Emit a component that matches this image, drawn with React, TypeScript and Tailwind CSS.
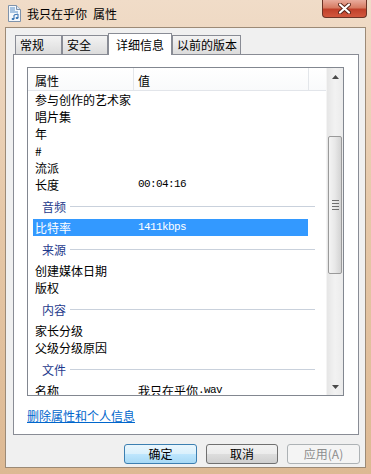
import React from "react";

type Row = { k: string; v?: string; group?: boolean; sel?: boolean };

const rows: Row[] = [
  { k: "参与创作的艺术家" },
  { k: "唱片集" },
  { k: "年" },
  { k: "#" },
  { k: "流派" },
  { k: "长度", v: "00:04:16" },
  { k: "音频", group: true },
  { k: "比特率", v: "1411kbps", sel: true },
  { k: "来源", group: true },
  { k: "创建媒体日期" },
  { k: "版权" },
  { k: "内容", group: true },
  { k: "家长分级" },
  { k: "父级分级原因" },
  { k: "文件", group: true },
  { k: "名称", v: "我只在乎你" },
];

function FileIcon() {
  return (
    <svg width="15" height="17" viewBox="0 0 15 17">
      <path d="M1.5 0.5h8l4 4v12h-12z" fill="#f4f8fc" stroke="#7f93ab" />
      <path d="M9.5 0.5v4h4" fill="#dfe8f2" stroke="#7f93ab" />
      <rect x="3" y="2.5" width="5" height="1" fill="#5b8fc7" />
      <rect x="3" y="4.5" width="5" height="1" fill="#5b8fc7" />
      <rect x="3" y="6.5" width="8" height="1" fill="#5b8fc7" />
      <path d="M7 14V10l4-1v4" fill="none" stroke="#2f6db0" strokeWidth="1" />
      <ellipse cx="6" cy="14" rx="1.4" ry="1" fill="#2f6db0" />
      <ellipse cx="10" cy="13" rx="1.4" ry="1" fill="#2f6db0" />
    </svg>
  );
}

function CloseX() {
  return (
    <svg width="13" height="11" viewBox="0 0 13 11">
      <path d="M2 1.5l9 8M11 1.5l-9 8" stroke="#5a2418" strokeWidth="4" strokeLinecap="round" />
      <path d="M2 1.5l9 8M11 1.5l-9 8" stroke="#ffffff" strokeWidth="2.2" strokeLinecap="round" />
    </svg>
  );
}

function Arrow({ up }: { up?: boolean }) {
  return (
    <svg width="7" height="4" viewBox="0 0 7 4">
      <path d={up ? "M0 4L3.5 0L7 4z" : "M0 0L3.5 4L7 0z"} fill="#4a4a4a" />
    </svg>
  );
}

function Tab({ label, w, selected }: { label: string; w: string; selected?: boolean }) {
  if (selected) {
    return (
      <div
        className={`${w} h-[22px] border border-b-0 border-[#898c95] bg-white flex items-center pl-[7px] text-[12px] text-black`}
      >
        {label}
      </div>
    );
  }
  return (
    <div
      className={`${w} mt-[2px] h-[19px] border border-b-0 border-[#898c95] bg-gradient-to-b from-[#f3f3f3] to-[#dcdcdc] flex items-center pl-[4px] text-[12px] text-black`}
    >
      {label}
    </div>
  );
}

export default function App() {
  return (
    <div className="w-[371px] h-[474px] overflow-hidden bg-[linear-gradient(180deg,#f0dcc8_0%,#e6c8a8_45%,#ddb993_100%)] font-['Noto_Sans_CJK_SC',sans-serif] leading-none">
      {/* title bar */}
      <div className="h-[27px] flex items-start">
        <div className="ml-[7px] mt-[5px]">
          <FileIcon />
        </div>
        <div className="ml-[5px] mt-[8px] text-[12px] text-black flex">
          <span>我只在乎你</span>
          <span className="ml-[6px]">属性</span>
        </div>
        <div className="ml-auto mr-[4px] w-[45px] h-[18px] rounded-b-[4px] border border-t-0 border-[#6b3326] bg-[linear-gradient(180deg,#e9ab9c_0%,#d77b63_45%,#c0402a_55%,#d2583e_100%)] flex items-center justify-center">
          <CloseX />
        </div>
      </div>

      {/* client */}
      <div className="ml-[5px] w-[361px] h-[441px] border border-[#9c8a76] bg-[#f0f0f0]">
        <div className="pt-[5px] pl-[7px]">
          <div className="relative z-10 flex items-start h-[22px] pl-[2px]">
            <Tab label="常规" w="w-[47px]" />
            <Tab label="安全" w="w-[46px]" />
            <Tab label="详细信息" w="w-[64px]" selected />
            <Tab label="以前的版本" w="w-[69px]" />
          </div>

          {/* tab page */}
          <div className="-mt-px w-[346px] h-[381px] border border-[#898c95] bg-white">
            <div className="ml-[13px] mt-[12px] w-[317px] h-[329px] border border-[#828790] flex overflow-hidden">
              <div className="w-[298px] h-full overflow-hidden">
                {/* header */}
                <div className="h-[23px] flex border-b border-[#e2e5ea] bg-gradient-to-b from-white to-[#f9fafb] text-[12px] text-black">
                  <div className="w-[106px] border-r border-[#e3e6ea] pl-[7px] pt-[3px] flex items-center">属性</div>
                  <div className="w-[175px] border-r border-[#e3e6ea] pl-[4px] pt-[3px] flex items-center">值</div>
                  <div className="flex-1" />
                </div>
                {/* rows */}
                {rows.map((r, i) =>
                  r.group ? (
                    <div key={i} className="h-[26px] w-[287px] pl-[14px] pt-[1px] flex items-center">
                      <span className="text-[12px] text-[#1e3a8c]">{r.k}</span>
                      <div className="ml-[4px] flex-1 h-px bg-[#c9d1dc]" />
                    </div>
                  ) : (
                    <div
                      key={i}
                      className={`ml-[5px] w-[275px] h-[17px] flex items-center ${r.sel ? "bg-[#3399ff] text-white" : "text-black"}`}
                    >
                      <span className="w-[105px] pl-[2px] text-[12px]">{r.k}</span>
                      {r.k === "名称" ? (
                        <span className="flex items-center">
                          <span className="text-[12px]">{r.v}</span>
                          <span className="font-['Liberation_Mono',monospace] text-[11px] tracking-[-0.6px]">.wav</span>
                        </span>
                      ) : r.v ? (
                        <span className="font-['Liberation_Mono',monospace] text-[11px] tracking-[-0.6px]">{r.v}</span>
                      ) : null}
                    </div>
                  )
                )}
              </div>
              {/* scrollbar */}
              <div className="w-[17px] h-full flex flex-col bg-gradient-to-r from-[#e6e6e6] via-[#f2f2f2] to-[#ebebeb] border-l border-[#f4f4f4]">
                <div className="h-[17px] flex items-center justify-center">
                  <Arrow up />
                </div>
                <div className="flex-1 flex flex-col">
                  <div className="mt-[51px] mx-[1px] h-[138px] rounded-[2px] border border-[#9a9a9a] bg-gradient-to-r from-[#f4f4f4] via-[#e8e8e8] to-[#d3d3d3] flex flex-col items-center justify-center gap-[2px]">
                    <div className="w-[7px] h-px bg-[#6e6e6e]" />
                    <div className="w-[7px] h-px bg-[#6e6e6e]" />
                    <div className="w-[7px] h-px bg-[#6e6e6e]" />
                    <div className="w-[7px] h-px bg-[#6e6e6e]" />
                  </div>
                </div>
                <div className="h-[17px] flex items-center justify-center">
                  <Arrow />
                </div>
              </div>
            </div>
            <div className="ml-[13px] mt-[10px]">
              <span className="text-[12px] text-[#0066cc] underline">删除属性和个人信息</span>
            </div>
          </div>

          {/* buttons */}
          <div className="mt-[9px] mr-[5px] flex justify-end text-[12px]">
            <div className="w-[73px] h-[20px] rounded-[3px] border border-[#3c7fb1] bg-[linear-gradient(180deg,#eaf6fd_0%,#d9f0fc_50%,#bee6fd_51%,#a7d9f5_100%)] flex items-center justify-center text-black">
              确定
            </div>
            <div className="ml-[9px] w-[72px] h-[20px] rounded-[3px] border border-[#707070] bg-[linear-gradient(180deg,#f2f2f2_0%,#ebebeb_50%,#dddddd_51%,#cfcfcf_100%)] flex items-center justify-center text-black">
              取消
            </div>
            <div className="ml-[9px] w-[73px] h-[20px] rounded-[3px] border border-[#adb2b5] bg-[#f4f4f4] flex items-center justify-center text-[#8d8d8d]">
              应用(A)
            </div>
          </div>
        </div>
      </div>
    </div>
  );
}
